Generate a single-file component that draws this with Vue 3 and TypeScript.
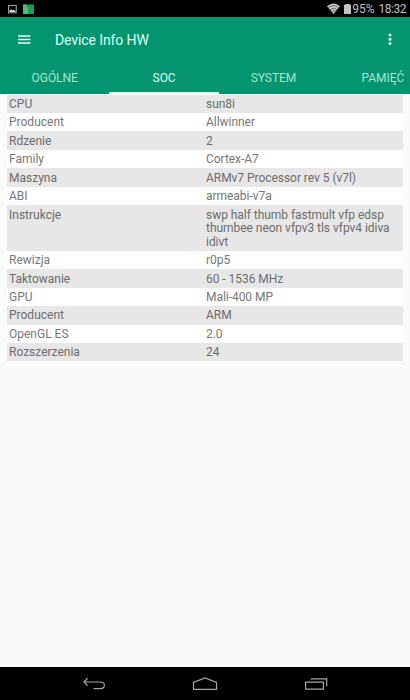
<template>
  <div class="screen">
    <div class="status-bar">
      <svg
        class="notifications"
        width="28"
        height="12"
        viewBox="0 0 28 12">
        <rect x="0.6" y="2.4" width="7.6" height="7.4" fill="none" stroke="#aaa" />
        <path d="M1.5 9V7.6l1.8-1.3 1.5 1.2 1-.8 1.7 1.3v1z" fill="#d8d8d8" />
        <path d="M15 1.5h11v9.5H15z" fill="#1d9a5c" />
        <path d="M15 1.5h3l2 3.5v6h-5z" fill="#55bd6a" />
      </svg>
      <div class="status-right">
        <svg
          class="wifi"
          width="13"
          height="11"
          viewBox="0 0 13 11">
          <path d="M0 3.3Q6.5-2.3 13 3.3L6.5 11z" fill="#c8c8c8" />
          <path
            d="M1.2 4.8Q6.5.4 11.8 4.8M2.8 6.7Q6.5 3.8 10.2 6.7M4.4 8.5Q6.5 7 8.6 8.5"
            fill="none"
            stroke="#222"
            stroke-width=".6" />
        </svg>
        <svg
          class="battery"
          width="7"
          height="10"
          viewBox="0 0 7 10">
          <path d="M0 .7h1.5V0h4v.7H7V10H0z" fill="#c4c4c4" />
        </svg>
        <span class="percent">95%</span>
        <span class="clock">18:32</span>
      </div>
    </div>

    <header class="app-bar">
      <div class="toolbar">
        <svg
          class="menu"
          width="13"
          height="9"
          viewBox="0 0 13 9">
          <path d="M0 .9h12.4M0 4.5h12.4M0 8.1h12.4" stroke="#e6fff6" stroke-width="1.5" />
        </svg>
        <h1>Device Info HW</h1>
        <svg
          class="more"
          width="4"
          height="13"
          viewBox="0 0 4 13">
          <circle cx="2" cy="2" r="1.5" />
          <circle cx="2" cy="6.3" r="1.5" />
          <circle cx="2" cy="10.6" r="1.5" />
        </svg>
      </div>
      <nav class="tabs">
        <button
          v-for="tab in tabs"
          :key="tab"
          class="tab"
          :class="{ active: tab === activeTab }"
          @click="activeTab = tab">
          <span>{{ tab }}</span>
        </button>
      </nav>
    </header>

    <main class="content">
      <div
        v-for="(row, index) in rows"
        :key="index"
        class="row">
        <div class="label">{{ row.label }}</div>
        <div class="value">{{ row.value }}</div>
      </div>
    </main>

    <footer class="nav-bar">
      <svg width="24" height="14" viewBox="0 0 24 14">
        <path d="M5.7 1.2 2 5l3.7 3.7M2 5h16.2q4.2 0 4.2 3.3t-4.2 3.3H11.5" />
      </svg>
      <svg width="26" height="14" viewBox="0 0 26 14">
        <path d="M1.5 12.4V5.5L13 1l11.5 4.5v6.9z" />
      </svg>
      <svg width="24" height="14" viewBox="0 0 24 14">
        <path d="M1.6 5.2h17.8v6.9H1.6zM6.7 1.8h16v7.5" />
      </svg>
    </footer>
  </div>
</template>

<script setup lang="ts">
import { ref } from 'vue';

interface InfoRow {
  label: string;
  value: string;
}

const tabs = ['OGÓLNE', 'SOC', 'SYSTEM', 'PAMIĘĆ'];
const activeTab = ref('SOC');

const rows: InfoRow[] = [
  { label: 'CPU', value: 'sun8i' },
  { label: 'Producent', value: 'Allwinner' },
  { label: 'Rdzenie', value: '2' },
  { label: 'Family', value: 'Cortex-A7' },
  { label: 'Maszyna', value: 'ARMv7 Processor rev 5 (v7l)' },
  { label: 'ABI', value: 'armeabi-v7a' },
  {
    label: 'Instrukcje',
    value: 'swp half thumb fastmult vfp edsp thumbee neon vfpv3 tls vfpv4 idiva idivt',
  },
  { label: 'Rewizja', value: 'r0p5' },
  { label: 'Taktowanie', value: '60 - 1536 MHz' },
  { label: 'GPU', value: 'Mali-400 MP' },
  { label: 'Producent', value: 'ARM' },
  { label: 'OpenGL ES', value: '2.0' },
  { label: 'Rozszerzenia', value: '24' },
];
</script>

<style>
body {
  margin: 0;
  background: #fafafa;
}
</style>

<style scoped>
.screen {
  display: flex;
  flex-direction: column;
  width: 410px;
  height: 700px;
  overflow: hidden;
  background: #fafafa;
  font-family: Roboto, 'Liberation Sans', sans-serif;
}

svg {
  display: block;
  flex: none;
}

.status-bar {
  display: flex;
  justify-content: space-between;
  align-items: center;
  box-sizing: border-box;
  height: 17px;
  padding: 0 4px 0 7.5px;
  background: #000;
}

.status-right {
  display: flex;
  align-items: center;
  color: #c0c0c0;
  font-size: 12px;
  line-height: 17px;
}

.battery {
  margin-left: 4px;
}

.percent {
  margin-left: 1.5px;
  padding-top: 1px;
}

.clock {
  margin-left: 4px;
  padding-top: 1px;
  letter-spacing: -0.5px;
}

.app-bar {
  height: 77px;
  background: #04946f;
}

.toolbar {
  display: flex;
  align-items: center;
  height: 45px;
  padding: 0 18px;
}

.toolbar h1 {
  flex: 1;
  margin: 0 0 0 24px;
  color: #dcfff4;
  font-size: 14px;
  font-weight: 400;
  letter-spacing: -0.1px;
}

.more {
  fill: #e6fff6;
}

.tabs {
  display: flex;
  height: 32px;
  overflow: hidden;
}

.tab {
  display: block;
  flex: 0 0 109.4px;
  box-sizing: border-box;
  height: 32px;
  padding: 1px 0 0;
  border: 0;
  border-bottom: 2px solid transparent;
  background: none;
  color: #a5e6d0;
  font: 400 12px/30px Roboto, 'Liberation Sans', sans-serif;
  letter-spacing: -0.05px;
  text-align: center;
}

.tab.active {
  border-bottom-color: #dff5ee;
  color: #dcfff4;
}

.content {
  flex: 1;
  padding: 0.6px 7px 0;
}

.row {
  display: flex;
  box-sizing: border-box;
  padding: 3.4px 0 1.4px;
  background: #fff;
  color: #777;
  font-size: 12px;
  line-height: 13.64px;
}

.row:nth-child(odd) {
  background: #e7e7e7;
  color: #6c6c6c;
}

.label {
  flex: 0 0 197px;
  box-sizing: border-box;
  padding-left: 2px;
}

.value {
  flex: 1;
  padding: 0 2px;
  letter-spacing: -0.04px;
}

.nav-bar {
  display: flex;
  justify-content: space-between;
  align-items: center;
  box-sizing: border-box;
  height: 33px;
  padding: 1px 82px 0;
  background: #000;
}

.nav-bar path {
  fill: none;
  stroke: #a5a5a5;
  stroke-width: 1.2;
}
</style>
